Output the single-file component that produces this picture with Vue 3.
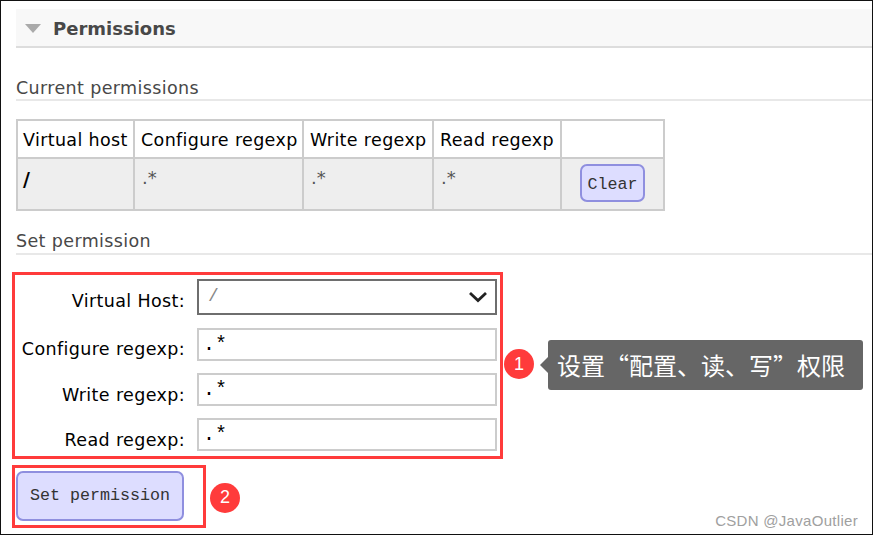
<script setup>
const columns = ['Virtual host', 'Configure regexp', 'Write regexp', 'Read regexp', '']
const fields = [
  { label: 'Configure regexp:', cls: 'r-config' },
  { label: 'Write regexp:', cls: 'r-write' },
  { label: 'Read regexp:', cls: 'r-read' }
]
</script>

<template>
  <div class="frame">
    <div class="section-head">
      <span class="tri"></span>
      <h2>Permissions</h2>
    </div>

    <h3 class="sub first">Current permissions</h3>
    <table class="perm">
      <colgroup>
        <col class="c1" /><col class="c2" /><col class="c3" /><col class="c4" /><col class="c5" />
      </colgroup>
      <thead>
        <tr><th v-for="c in columns" :key="c">{{ c }}</th></tr>
      </thead>
      <tbody>
        <tr>
          <td class="host">/</td>
          <td class="rx">.*</td>
          <td class="rx">.*</td>
          <td class="rx">.*</td>
          <td class="act"><button class="btn small">Clear</button></td>
        </tr>
      </tbody>
    </table>

    <h3 class="sub second">Set permission</h3>

    <div class="form-area">
      <div class="mark form-mark">
        <div class="row r-host">
          <label>Virtual Host:</label>
          <div class="select">
            <span class="slash">/</span>
            <svg width="20" height="12" viewBox="0 0 20 12"><path d="M2 2 L10 9.5 L18 2" fill="none" stroke="#222" stroke-width="2.8" /></svg>
          </div>
        </div>
        <div v-for="f in fields" :key="f.label" class="row" :class="f.cls">
          <label>{{ f.label }}</label>
          <div class="input">.*</div>
        </div>
      </div>

      <div class="callout">
        <span class="badge">1</span>
        <div class="tip">设置“配置、读、写”权限</div>
      </div>
    </div>

    <div class="submit-area">
      <div class="mark submit-mark">
        <button class="btn big">Set permission</button>
      </div>
      <span class="badge two">2</span>
    </div>

    <div class="watermark">CSDN @JavaOutlier</div>
  </div>
</template>

<style>
html, body { margin: 0; background: #fff; }
</style>

<style scoped>
.frame {
  position: relative;
  box-sizing: border-box;
  width: 873px;
  height: 535px;
  padding: 8px 0 0 15px;
  border: 1px solid #111;
  background: #fff;
  overflow: hidden;
  font-family: "DejaVu Sans", Verdana, sans-serif;
}
.section-head {
  display: flex;
  align-items: center;
  height: 37px;
  background: #f8f8f8;
  border-bottom: 2px solid #ddd;
  padding-left: 9px;
}
.tri {
  width: 0;
  height: 0;
  margin: 2px 12px 0 0;
  border-left: 8px solid transparent;
  border-right: 8px solid transparent;
  border-top: 9px solid #aaa;
}
h2 {
  margin: 0;
  padding-top: 2px;
  font-size: 18px;
  font-weight: 700;
  color: #484848;
}
.sub {
  margin: 0;
  font-size: 17.5px;
  letter-spacing: 0.37px;
  font-weight: 400;
  line-height: 20px;
  color: #484848;
  padding-bottom: 1px;
  border-bottom: 2px solid #e8e8e8;
}
.sub.first { margin-top: 30px; }
.sub.second { margin-top: 20px; padding-bottom: 2px; }
.perm {
  border-collapse: collapse;
  margin: 18px 0 0 0;
  table-layout: fixed;
  width: 647px;
  font-size: 17.5px;
  letter-spacing: 0.35px;
  color: #000;
}
.c1 { width: 117px; }
.c2 { width: 169px; }
.c3 { width: 130px; }
.c4 { width: 128px; }
.c5 { width: 103px; }
.perm th, .perm td {
  border: 2px solid #ccc;
  padding: 0 0 0 6px;
  text-align: left;
  box-sizing: border-box;
  white-space: nowrap;
}
.perm th:first-child, .perm td.host { padding-left: 5px; }
.perm th { font-weight: 400; height: 38px; padding-top: 2px; }
.perm td { background: #eee; height: 52px; vertical-align: top; padding-top: 8px; }
.perm td.host { font-weight: 700; font-size: 19px; padding-top: 9px; }
.rx { color: #555; font-size: 18px; letter-spacing: 0; }
.perm td.rx { padding-left: 7px; }
.perm td.act { padding: 5px 0 0 18px; }
.btn {
  display: block;
  background: #ddf;
  border: 2px solid #8f8fdf;
  border-radius: 7px;
  font-family: "Liberation Mono", monospace;
  font-size: 16.67px;
  color: #333;
  padding: 0;
  text-align: center;
}
.small { width: 65px; height: 38px; padding-top: 3px; }
.big { width: 168px; height: 50px; padding-bottom: 1px; }

.form-area {
  position: relative;
  margin: 17px 0 0 -4px;
}
.mark {
  box-sizing: border-box;
  border: 3px solid #ff3b3b;
}
.form-mark {
  width: 491px;
  height: 187px;
  padding-top: 4px;
}
.row {
  display: grid;
  grid-template-columns: 170px 300px;
  column-gap: 12px;
  align-items: center;
}
.row label {
  font-size: 17.5px;
  letter-spacing: 0.37px;
  text-align: right;
  color: #000;
  white-space: nowrap;
}
.r-host label { padding-top: 8px; }
.r-config label { padding-top: 8px; }
.r-write label { padding-top: 10px; }
.r-read label { padding-top: 10px; }
.r-host { height: 36px; }
.r-config { margin-top: 13px; height: 33px; }
.r-write { margin-top: 12px; height: 33px; }
.r-read { margin-top: 12px; height: 33px; }
.select {
  box-sizing: border-box;
  width: 300px;
  height: 36px;
  border: 2px solid #6e6e6e;
  display: flex;
  align-items: center;
  justify-content: space-between;
  padding: 0 7px 0 9px;
}
.slash {
  font-family: "Liberation Mono", monospace;
  font-size: 18px;
  color: #888;
  margin-top: -2px;
}
.input {
  box-sizing: border-box;
  width: 300px;
  height: 33px;
  border: 2px solid #ccc;
  padding: 2px 0 0 4px;
  font-family: "Liberation Mono", monospace;
  font-size: 20px;
  line-height: 26px;
  color: #000;
}
.callout {
  position: absolute;
  left: 492px;
  top: 68px;
  display: flex;
  align-items: center;
}
.badge {
  display: flex;
  align-items: center;
  justify-content: center;
  width: 30px;
  height: 30px;
  border-radius: 50%;
  background: #ff3b3b;
  color: #fff;
  font-family: "Liberation Sans", sans-serif;
  font-size: 18px;
}
.callout .badge { margin-bottom: 2px; }
.tip {
  position: relative;
  box-sizing: border-box;
  width: 315px;
  height: 50px;
  margin-left: 14px;
  padding-left: 9px;
  background: #666;
  border-radius: 3px;
  color: #fff;
  font-family: "Noto Sans CJK SC", sans-serif;
  font-size: 24px;
  line-height: 50px;
  white-space: nowrap;
}
.tip::before {
  content: "";
  position: absolute;
  left: -8px;
  top: 17px;
  border-top: 8px solid transparent;
  border-bottom: 8px solid transparent;
  border-right: 8px solid #666;
}
.submit-area {
  display: flex;
  align-items: center;
  margin: 6px 0 0 -4px;
}
.submit-mark {
  width: 194px;
  height: 63px;
  padding: 3px 0 0 1px;
}
.badge.two { margin-left: 4px; margin-top: 2px; }
.watermark {
  position: absolute;
  right: 14px;
  bottom: 5px;
  font-family: "Liberation Sans", sans-serif;
  font-size: 15px;
  letter-spacing: 0.3px;
  color: #a0a0a0;
}
</style>
